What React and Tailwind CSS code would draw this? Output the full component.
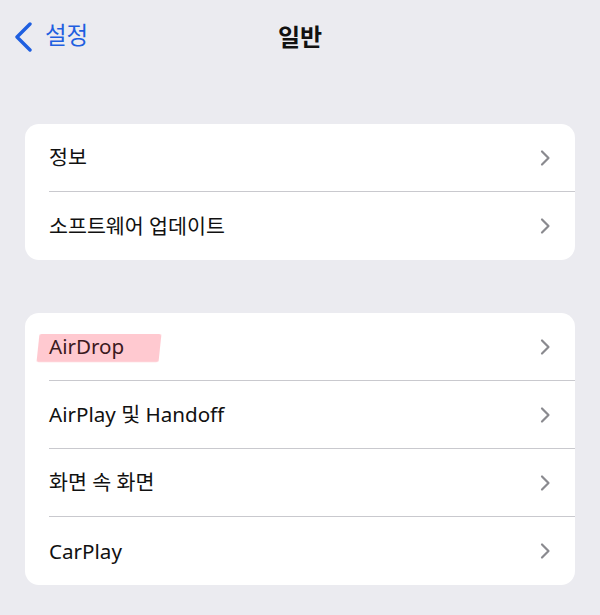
import React from "react";

const groups = [
  ["정보", "소프트웨어 업데이트"],
  ["AirDrop", "AirPlay 및 Handoff", "화면 속 화면", "CarPlay"],
];

const Chevron = () => (
  <svg width="12" height="18" viewBox="0 0 12 18" fill="none">
    <path d="M3 2.5 L9.5 9 L3 15.5" stroke="#8a8a8f" strokeWidth="2.2" strokeLinecap="round" strokeLinejoin="round" />
  </svg>
);

const Row = ({ label, last }) => (
  <div className="flex h-[68px] items-center pl-6">
    <div className={`flex h-full flex-1 items-center justify-between pr-6 ${last ? "" : "border-b border-[#c9c9ce]"}`}>
      {label === "AirDrop" ? (
        <span className="relative">
          <span className="absolute -left-[11px] -right-[36px] top-[3px] bottom-[0px] -skew-x-6 rounded-[2px] bg-[#ffbcc5] opacity-80 blur-[0.6px]" />
          <span className="relative text-[#3b1a1e]">{label}</span>
        </span>
      ) : (
        <span>{label}</span>
      )}
      <Chevron />
    </div>
  </div>
);

export default function App() {
  return (
    <div
      className="h-[615px] w-[600px] overflow-hidden bg-[#ebebf0] text-[20.6px] text-[#111]"
      style={{ fontFamily: '"Noto Sans", "Noto Sans CJK KR", sans-serif' }}
    >
      {/* NAV BAR */}
      <div className="relative flex h-[74px] items-center justify-center">
        <div className="absolute left-[12px] top-[20px] flex items-center gap-[11px] text-[#1f5fe0]">
          <svg width="22" height="32" viewBox="0 0 22 32" fill="none">
            <path d="M18 4 L5 17 L18 30" stroke="#1f5fe0" strokeWidth="3.4" strokeLinecap="round" strokeLinejoin="round" />
          </svg>
          <span className="text-[23.5px] leading-none">설정</span>
        </div>
        <span className="text-[24px] font-bold leading-none">일반</span>
      </div>

      {/* GROUPS */}
      <div className="flex flex-col gap-[53px] px-[25px] pt-[50px]">
        {groups.map((rows, gi) => (
          <div key={gi} className="overflow-hidden rounded-[14px] bg-white">
            {rows.map((r, i) => (
              <Row key={r} label={r} last={i === rows.length - 1} />
            ))}
          </div>
        ))}
      </div>
    </div>
  );
}
